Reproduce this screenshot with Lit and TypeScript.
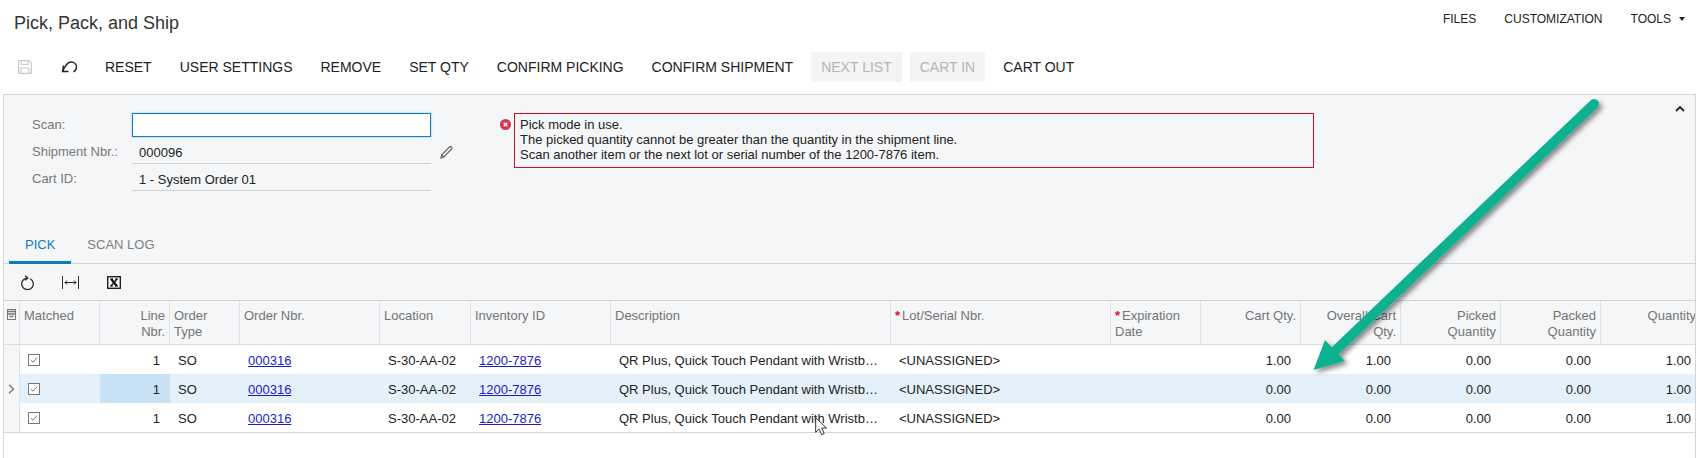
import {css, html, LitElement} from 'lit';
import {customElement} from 'lit/decorators.js';

const toolbar = [
  {label: 'RESET'},
  {label: 'USER SETTINGS'},
  {label: 'REMOVE'},
  {label: 'SET QTY'},
  {label: 'CONFIRM PICKING'},
  {label: 'CONFIRM SHIPMENT'},
  {label: 'NEXT LIST', disabled: true},
  {label: 'CART IN', disabled: true},
  {label: 'CART OUT'},
];

const columns = [
  {label: 'Matched'},
  {label: 'Line<br>Nbr.', right: true},
  {label: 'Order<br>Type'},
  {label: 'Order Nbr.'},
  {label: 'Location'},
  {label: 'Inventory ID'},
  {label: 'Description'},
  {label: 'Lot/Serial Nbr.', required: true},
  {label: 'Expiration<br>Date', required: true},
  {label: 'Cart Qty.', right: true},
  {label: 'Overall Cart<br>Qty.', right: true},
  {label: 'Picked<br>Quantity', right: true},
  {label: 'Packed<br>Quantity', right: true},
  {label: 'Quantity', right: true},
];

const rows = [
  {cart: '1.00', overall: '1.00'},
  {cart: '0.00', overall: '0.00', selected: true},
  {cart: '0.00', overall: '0.00'},
];

const headerLabel = (text: string) => {
  const parts = text.split('<br>');
  return parts.map((p, i) => (i ? html`<br />${p}` : p));
};

@customElement('app-root')
export class AppRoot extends LitElement {
  render() {
    return html`
      <div class="top">
        <div class="title">Pick, Pack, and Ship</div>
        <div class="top-links">
          <span>FILES</span>
          <span>CUSTOMIZATION</span>
          <span class="tools">TOOLS<i class="caret"></i></span>
        </div>
      </div>

      <div class="toolbar">
        <button class="icon-btn save">
          <svg width="14" height="14" viewBox="0 0 14 14" fill="none" stroke="#cbcbcb" stroke-width="1.200">
            <path d="M.6.6h10.400l2.400 2.400v10.400H.6z" />
            <path d="M3.500.6v3.900h6.500V.6M3 13.400V8h8v5.400" />
          </svg>
        </button>
        <button class="icon-btn undo">
          <svg width="17" height="13" viewBox="0 0 17 13" fill="none" stroke="#222" stroke-width="1.400">
            <path d="M2.500 4.500l-1 6h6" />
            <path d="M1.800 10C4 5 6.500 1 10 1c3.500 0 5.500 2.500 5.500 5 0 2-1.500 4-3 5" />
          </svg>
        </button>
        ${toolbar.map(
          (b) => html`<button class="btn ${b.disabled ? 'disabled' : ''}">${b.label}</button>`
        )}
      </div>

      <div class="panel">
        <div class="summary">
          <div class="form">
            <label class="scan">Scan:</label>
            <div class="input"></div>
            <label>Shipment Nbr.:</label>
            <div class="value">000096</div>
            <label>Cart ID:</label>
            <div class="value">1 - System Order 01</div>
          </div>
          <svg class="pencil" width="13" height="13" viewBox="0 0 13 13" fill="none" stroke="#666" stroke-width="1.200">
            <path d="M1 12l.7-3.300L9.500 1c.600-.600 1.400-.600 2 0s.600 1.400 0 2L3.800 11z" />
            <path d="M1.700 8.700l2.100 2.300" />
          </svg>
          <svg class="err-icon" width="11" height="11" viewBox="0 0 11 11">
            <circle cx="5.500" cy="5.500" r="5.500" fill="#dc3350" />
            <path d="M3.700 3.700l3.600 3.600M7.300 3.700l-3.600 3.600" stroke="#fff" stroke-width="1.400" />
          </svg>
          <div class="error">
            Pick mode in use.<br />
            The picked quantity cannot be greater than the quantity in the shipment line.<br />
            Scan another item or the next lot or serial number of the 1200-7876 item.
          </div>
          <svg class="collapse" width="10" height="7" viewBox="0 0 10 7" fill="none" stroke="#222" stroke-width="1.800">
            <path d="M1 6l4-4 4 4" />
          </svg>
        </div>

        <div class="tabs">
          <div class="tab active">PICK</div>
          <div class="tab">SCAN LOG</div>
        </div>

        <div class="grid-tools">
          <svg width="14" height="15" viewBox="0 0 14 15" fill="none" stroke="#222" stroke-width="1.200">
            <path d="M10.300 3.700A5.800 5.800 0 1 1 7.300 3" />
            <path d="M5 .8L7.800 3 5 5.300" />
          </svg>
          <svg width="17" height="13" viewBox="0 0 17 13" fill="none" stroke="#222" stroke-width="1">
            <path d="M.5 0v13M16.500 0v13" stroke="#3a2a2a" />
            <path d="M3 6.500h11M5 4.500l-2 2 2 2M12 4.500l2 2-2 2" />
          </svg>
          <svg width="14" height="13" viewBox="0 0 14 13" fill="none" stroke="#111">
            <rect x=".7" y=".7" width="12.600" height="11.600" stroke-width="1.300" />
            <path d="M4.300 3l5.400 7" stroke-width="2.200" />
            <path d="M10 3l-6 7" stroke-width="1.300" />
            <path d="M3 3h3M8 3h3M3 10h3M8 10h3" stroke-width="1" />
          </svg>
        </div>

        <div class="table">
          <div class="head">
            <div class="gutter">
              <svg width="9" height="11" viewBox="0 0 9 11" fill="none" stroke="#777" stroke-width="1">
                <rect x=".5" y=".5" width="8" height="10" />
                <path d="M.5 2.500h8M.5 5h8M2.500 7.500h4" stroke-width="1.400" />
              </svg>
            </div>
            ${columns.map(
              (c) => html`<div class="th ${c.right ? 'right' : ''}">
                ${c.required ? html`<span class="star">*</span>` : ''}<span
                  >${headerLabel(c.label)}</span
                >
              </div>`
            )}
          </div>
          ${rows.map(
            (r) => html`<div class="row ${r.selected ? 'selected' : ''}">
              <div class="gutter">
                ${r.selected
                  ? html`<svg width="7" height="10" viewBox="0 0 7 10" fill="none" stroke="#777" stroke-width="1.300">
                      <path d="M1 .7l4.500 4.300L1 9.300" />
                    </svg>`
                  : ''}
              </div>
              <div class="td">
                <svg class="check" width="12" height="12" viewBox="0 0 12 12" fill="#fff" stroke="#777" stroke-width="1">
                  <rect x=".5" y=".5" width="11" height="11" />
                  <path d="M2.800 6l2.200 2.200 4-4.500" fill="none" />
                </svg>
              </div>
              <div class="td right line">1</div>
              <div class="td">SO</div>
              <div class="td"><a>000316</a></div>
              <div class="td">S-30-AA-02</div>
              <div class="td"><a>1200-7876</a></div>
              <div class="td">QR Plus, Quick Touch Pendant with Wristband</div>
              <div class="td">&lt;UNASSIGNED&gt;</div>
              <div class="td"></div>
              <div class="td right">${r.cart}</div>
              <div class="td right">${r.overall}</div>
              <div class="td right">0.00</div>
              <div class="td right">0.00</div>
              <div class="td right">1.00</div>
            </div>`
          )}
        </div>
      </div>

      <svg class="arrow" width="1700" height="458" viewBox="0 0 1700 458">
        <defs>
          <filter id="shadow" x="-10%" y="-10%" width="120%" height="120%">
            <feDropShadow dx="3" dy="3" stdDeviation="2.500" flood-color="#000" flood-opacity="0.450" />
          </filter>
        </defs>
        <g filter="url(#shadow)">
          <path d="M1594 104L1336 350" stroke="#0eb190" stroke-width="10" stroke-linecap="round" fill="none" />
          <path d="M1313.500 370l11.500-30 20 21z" fill="#0eb190" />
        </g>
      </svg>

      <svg class="cursor" width="13" height="19" viewBox="0 0 13 19">
        <path
          d="M.7.7v14.600l3.500-3.200 2.400 5.600 2.600-1.100-2.400-5.500h4.800z"
          fill="#fff"
          stroke="#333"
          stroke-width="1"
        />
      </svg>
    `;
  }

  static styles = css`
    :host {
      display: flex;
      flex-direction: column;
      position: relative;
      height: 458px;
      width: 1700px;
      overflow: hidden;
      background: #fff;
      font-family: 'Liberation Sans', Arial, sans-serif;
      font-size: 13px;
      color: #222;
    }

    .top {
      display: flex;
      justify-content: space-between;
      align-items: flex-start;
      height: 52px;
      padding: 12px 14px 0;
      box-sizing: border-box;
    }
    .title {
      font-size: 18px;
      line-height: 22px;
      color: #333;
    }
    .top-links {
      display: flex;
      gap: 28px;
      font-size: 12px;
      line-height: 14px;
      color: #222;
    }
    .tools {
      display: flex;
      align-items: center;
      margin-right: 1px;
    }
    .caret {
      margin-left: 8px;
      border: 3.500px solid transparent;
      border-top: 4px solid #222;
      border-bottom: 0;
    }

    .toolbar {
      display: flex;
      align-items: flex-start;
      height: 42px;
      gap: 8px;
    }
    button {
      all: unset;
      box-sizing: border-box;
      height: 30px;
      display: flex;
      align-items: center;
    }
    .btn {
      padding: 0 10px;
      font-size: 14px;
      color: #222;
    }
    .btn.disabled {
      background: #f4f4f4;
      color: #b5b5b5;
    }
    .icon-btn.save {
      margin-left: 18px;
      width: 35px;
    }
    .icon-btn.undo {
      margin-right: 7px;
      width: 19px;
    }

    .panel {
      flex: 1;
      margin: 0 4px 0 3px;
      border: 1px solid #d4d5d7;
      border-bottom: 0;
      background: #fff;
      display: flex;
      flex-direction: column;
      min-width: 0;
    }

    .summary {
      display: flex;
      align-items: flex-start;
      position: relative;
      height: 141px;
      padding: 18px 0 0 28px;
      box-sizing: border-box;
      background: #f4f6f8;
    }
    .form {
      display: grid;
      grid-template-columns: 100px 299px;
      grid-template-rows: 24px 27px 27px;
      align-items: center;
    }
    .form label {
      color: #777;
      line-height: 15px;
      padding-top: 2px;
    }
    .form label.scan {
      padding: 0 0 2px;
    }
    .input {
      height: 24px;
      box-sizing: border-box;
      background: #fff;
      border: 1px solid #1380c4;
      box-shadow: 0 0 2px #7fbce4;
    }
    .value {
      align-self: stretch;
      border-bottom: 1px solid #cfd1d3;
      padding: 8px 0 0 7px;
      line-height: 15px;
      box-sizing: border-box;
    }
    .pencil {
      margin: 33px 0 0 9px;
    }
    .err-icon {
      margin: 6px 0 0 47px;
    }
    .error {
      box-sizing: border-box;
      width: 800px;
      height: 55px;
      margin-left: 3px;
      padding: 3px 5px;
      border: 1px solid #d0102a;
      line-height: 15px;
      color: #222;
    }
    .collapse {
      position: absolute;
      top: 10px;
      right: 10px;
    }

    .tabs {
      display: flex;
      height: 28px;
      padding-left: 5px;
      box-sizing: border-box;
      background: #f4f6f8;
      border-bottom: 1px solid #d4d5d7;
    }
    .tab {
      padding: 1px 16px 0;
      height: 28px;
      box-sizing: border-box;
      line-height: 16px;
      color: #808080;
    }
    .tab.active {
      color: #1379b9;
      border-bottom: 3px solid #0f7bbf;
    }

    .grid-tools {
      display: flex;
      align-items: center;
      gap: 28px;
      height: 36px;
      padding-left: 16px;
      box-sizing: border-box;
      background: #f4f6f8;
    }

    .table {
      --cols: 16px 80px 70px 70px 140px 91px 140px 280px 220px 90px 100px 100px 100px 100px 100px;
      overflow: hidden;
    }
    .head,
    .row {
      display: grid;
      grid-template-columns: var(--cols);
      width: max-content;
    }
    .head {
      height: 45px;
      box-sizing: border-box;
      background: #f4f6f8;
      border-top: 1px solid #d4d5d7;
      border-bottom: 1px solid #dcdde0;
      color: #747474;
      line-height: 16px;
    }
    .th {
      padding: 7px 4px 0;
      border-right: 1px solid #e0e2e5;
      white-space: nowrap;
      overflow: hidden;
      box-sizing: border-box;
    }
    .th.right {
      text-align: right;
    }
    .star {
      color: #d0102a;
      font-weight: bold;
      margin-right: 2px;
    }
    .gutter {
      display: flex;
      align-items: center;
      justify-content: center;
      background: #f4f6f8;
      border-right: 1px solid #e0e2e5;
      box-sizing: border-box;
    }
    .head .gutter {
      align-items: flex-start;
      padding-top: 8px;
    }
    .row {
      height: 29px;
      box-sizing: border-box;
      line-height: 31px;
      background: #fff;
    }
    .row:last-child {
      height: 30px;
      border-bottom: 1px solid #d4d5d7;
    }
    .row.selected {
      background: #e4f1fa;
    }
    .td {
      padding: 0 10px 0 8px;
      white-space: nowrap;
      overflow: hidden;
      text-overflow: ellipsis;
      box-sizing: border-box;
      color: #222;
    }
    .td.right {
      text-align: right;
    }
    .row.selected .line {
      background: #c8e1f4;
    }
    .check {
      display: block;
      margin-top: 9px;
    }
    a {
      color: #1c1cc4;
      text-decoration: underline;
    }

    .arrow {
      position: absolute;
      inset: 0;
      pointer-events: none;
    }
    .cursor {
      position: absolute;
      left: 815px;
      top: 417px;
    }
  `;
}
